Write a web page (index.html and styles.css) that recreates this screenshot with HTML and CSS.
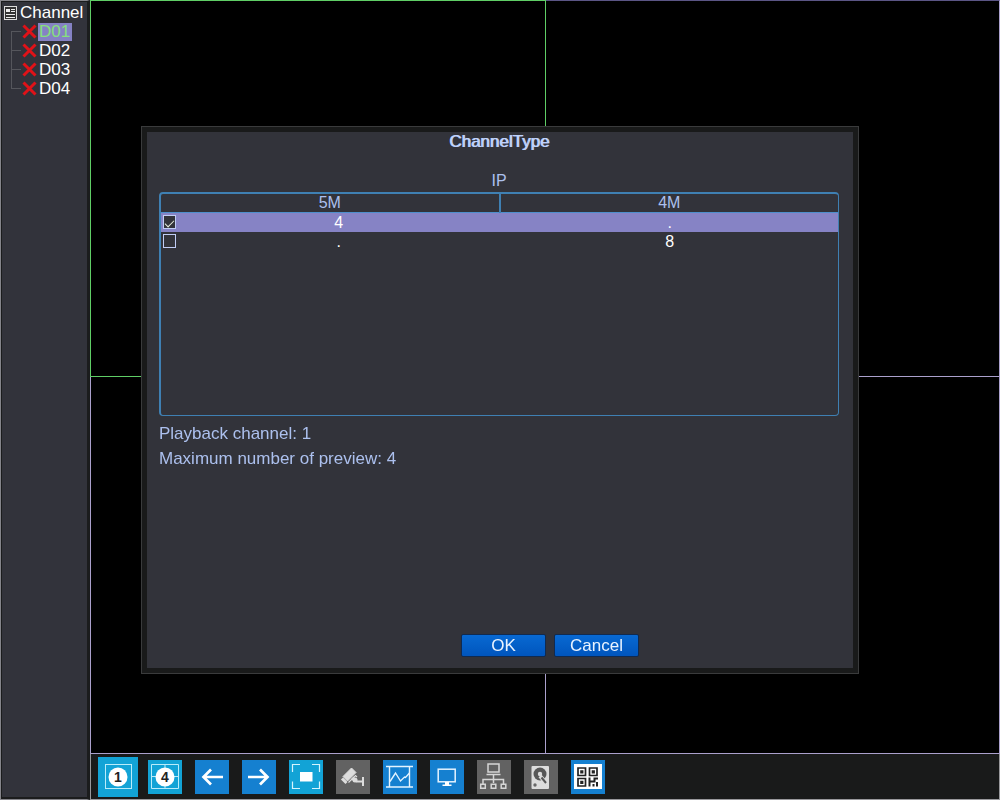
FILE: index.html
```html
<!DOCTYPE html>
<html lang="en">
<head>
<meta charset="utf-8">
<title>ChannelType</title>
<link rel="stylesheet" href="styles.css">
</head>
<body>
<div class="screen">
  <aside class="sidebar">
    <h2 class="tree-title">
      <svg class="tree-icon" viewBox="0 0 13 14" aria-hidden="true"><rect x=".5" y=".5" width="12" height="13" fill="#333" stroke="#ddd"/><path d="M2 3h4v3H2z" fill="#eee"/><path d="M7 3.500h4M7 5.500h4M2 8.500h9M2 11.500h9" stroke="#eee" fill="none"/></svg>
      Channel
    </h2>
    <ul class="tree">
      <li class="tree-item"><svg class="cross" viewBox="0 0 15 15" aria-hidden="true"><path d="M1.5 1.5l12 12M13.5 1.5l-12 12"/></svg><a class="tree-link selected" href="#d01">D01</a></li>
      <li class="tree-item"><svg class="cross" viewBox="0 0 15 15" aria-hidden="true"><path d="M1.5 1.5l12 12M13.5 1.5l-12 12"/></svg><a class="tree-link" href="#d02">D02</a></li>
      <li class="tree-item"><svg class="cross" viewBox="0 0 15 15" aria-hidden="true"><path d="M1.5 1.5l12 12M13.5 1.5l-12 12"/></svg><a class="tree-link" href="#d03">D03</a></li>
      <li class="tree-item"><svg class="cross" viewBox="0 0 15 15" aria-hidden="true"><path d="M1.5 1.5l12 12M13.5 1.5l-12 12"/></svg><a class="tree-link" href="#d04">D04</a></li>
    </ul>
  </aside>
  <main class="main">
    <div class="views">
      <div class="view active"></div>
      <div class="view"></div>
      <div class="view left"></div>
      <div class="view"></div>
    </div>
    <nav class="toolbar" aria-label="Preview tools">
      <button class="tool cyan current" type="button" aria-label="Single view"><svg viewBox="0 0 34 34"><rect x="4.500" y="4.500" width="26" height="24" fill="none" stroke="#b9ecfa"/><circle cx="17" cy="17" r="9.500" fill="#fff"/><text class="digit" x="17" y="22">1</text></svg></button>
      <button class="tool cyan" type="button" aria-label="Four views"><svg viewBox="0 0 34 34"><path d="M3.500 4.500h27v24h-27zM17 4v25M4 16.500h27" fill="none" stroke="#b9ecfa"/><circle cx="17" cy="17" r="9.500" fill="#fff"/><text class="digit" x="17" y="22">4</text></svg></button>
      <button class="tool" type="button" aria-label="Previous"><svg viewBox="0 0 34 34"><path d="M28 17H8.500M16 9.500L8.500 17l7.500 7.500" fill="none" stroke="#fff" stroke-width="2.700"/></svg></button>
      <button class="tool" type="button" aria-label="Next"><svg viewBox="0 0 34 34"><path d="M6 17h19.500M18 9.500l7.500 7.500-7.500 7.500" fill="none" stroke="#fff" stroke-width="2.700"/></svg></button>
      <button class="tool cyan" type="button" aria-label="Full screen"><svg viewBox="0 0 34 34"><path d="M3.500 12V4.500H11M23 4.500h7.500V12M30.500 21.500V28.500H23M11 28.500H3.500v-7" fill="none" stroke="#d4f4fd" stroke-width="1.200"/><rect x="11" y="12" width="12.500" height="9.500" fill="#fff"/></svg></button>
      <button class="tool gray" type="button" aria-label="PTZ camera"><svg viewBox="0 0 34 34"><path d="M7 16.500l8.500-8.500 4.500 4.500-8.500 8.500z" fill="#ddd" stroke="#ddd" stroke-linejoin="round"/><path d="M6 18.500l4.500 4.500" stroke="#ddd" stroke-width="3"/><path d="M12.500 22.500l7-7 1.500 1.500" fill="none" stroke="#ddd" stroke-width="1.200"/><circle cx="19" cy="20" r="2.500" fill="#ddd"/><path d="M15.500 20l2-2 3 3.500h6.500M27 17v9" fill="none" stroke="#ddd" stroke-width="2"/></svg></button>
      <button class="tool" type="button" aria-label="Image settings"><svg viewBox="0 0 34 34"><path d="M3 6.500h27M3 27h27M6.500 6v21M26.500 6v21" fill="none" stroke="#e4f3ff" stroke-width="1.400"/><path d="M7 21.500l5.500-8.500 5 8 4-4 1 .5 4-4.500" fill="none" stroke="#e4f3ff" stroke-width="1.400"/></svg></button>
      <button class="tool" type="button" aria-label="Display"><svg viewBox="0 0 34 34"><rect x="8.200" y="9.200" width="17" height="12.600" fill="none" stroke="#e4f3ff" stroke-width="1.500"/><path d="M15 22h4v2.500h2.500V26h-9v-1.500H15z" fill="#fff"/></svg></button>
      <button class="tool gray" type="button" aria-label="Network"><svg viewBox="0 0 34 34"><path d="M11 4h11v8H11zM9.500 14.500h14M16.500 15v8M6 23.500v-4h20.500v4M3.700 24.200h4.600v4H3.700zM14.200 24.200h4.600v4h-4.600zM24.200 24.200h4.600v4h-4.600z" fill="none" stroke="#d6d6d6" stroke-width="1.500"/></svg></button>
      <button class="tool gray" type="button" aria-label="Hard disk"><svg viewBox="0 0 34 34"><rect x="7.500" y="6" width="17.500" height="23" rx="1" fill="#ddd"/><circle cx="16" cy="14" r="6.500" fill="#585858"/><circle cx="16" cy="14" r="2.200" fill="#ddd"/><path d="M16 16l7 8" stroke="#ddd" stroke-width="4"/><path d="M17.500 17.500l4.500 5.500" stroke="#585858" stroke-width="2"/><circle cx="11" cy="25" r="1.700" fill="#686868"/></svg></button>
      <button class="tool" type="button" aria-label="QR code"><svg viewBox="0 0 34 34"><path d="M3 4h28v25H3z" fill="#fff"/><path d="M7 8h7.500v7.500H7zM18.500 8H26v7.500h-7.500zM7 18.500h7.500V26H7z" fill="none" stroke="#222" stroke-width="1.700"/><path d="M9.200 10.200h3.200v3.200H9.200zM20.700 10.200h3.200v3.200h-3.200zM9.200 20.700h3.200v3.200H9.200zM17.500 17.500h2v9h-2zM19.500 20.500h3v-3h4.500v2h-2.500v3h-5zM21.500 24h2v2.500h-2zM25 22h2v4.500h-2z" fill="#222"/></svg></button>
    </nav>
  </main>
</div>
<div class="overlay">
  <section class="dialog" role="dialog" aria-labelledby="dialog-title">
    <h1 class="dialog-title" id="dialog-title">ChannelType</h1>
    <p class="group">IP</p>
    <div class="list">
      <table class="table">
        <thead><tr><th>5M</th><th>4M</th></tr></thead>
        <tbody>
          <tr class="row-selected"><td><div class="choice"><input class="check" type="checkbox" id="mode-a" checked><label class="value" for="mode-a">4</label></div></td><td>.</td></tr>
          <tr><td><div class="choice"><input class="check" type="checkbox" id="mode-b"><label class="value" for="mode-b">.</label></div></td><td>8</td></tr>
        </tbody>
      </table>
    </div>
    <p class="info">Playback channel: 1</p>
    <p class="info">Maximum number of preview: 4</p>
    <div class="actions">
      <button class="btn" type="button">OK</button>
      <button class="btn" type="button">Cancel</button>
    </div>
  </section>
</div>
</body>
</html>
```
FILE: styles.css
```css
* { box-sizing: border-box; }

body {
  margin: 0;
  background: #000;
  color: #fff;
  font: 17px/19px "Liberation Sans", Arial, sans-serif;
}

button, input { font: inherit; }

.screen {
  display: grid;
  grid-template-columns: 90px 1fr;
  height: 100vh;
}

.sidebar {
  padding: 3px 0 0 3px;
  background: #32333b;
  border: 1px solid #85858b;
  border-right: 3px solid #1b1c1d;
  box-shadow: inset 1px 1px #1b1c1d, inset 0 -2px #1b1c1d;
}

.tree-title {
  display: flex;
  align-items: center;
  gap: 3px;
  margin: 0;
  font-size: 17px;
  font-weight: 400;
  line-height: 18px;
}

.tree-icon { width: 13px; height: 14px; }

.tree {
  margin: 0;
  padding: 0 0 0 7px;
  list-style: none;
}

.tree-item {
  display: flex;
  align-items: center;
  height: 19px;
  background:
    linear-gradient(#55565c, #55565c) 0 0 / 1px 100% no-repeat,
    linear-gradient(#55565c, #55565c) 0 9px / 10px 1px no-repeat;
}

.tree-item:last-child {
  background:
    linear-gradient(#55565c, #55565c) 0 0 / 1px 10px no-repeat,
    linear-gradient(#55565c, #55565c) 0 9px / 10px 1px no-repeat;
}

.tree-item:first-child {
  background:
    linear-gradient(#55565c, #55565c) 0 9px / 1px 10px no-repeat,
    linear-gradient(#55565c, #55565c) 0 9px / 10px 1px no-repeat;
}

.cross {
  width: 15px;
  height: 15px;
  margin-left: 11px;
  fill: none;
  stroke: #e01218;
  stroke-width: 3;
}

.tree-link {
  margin-left: 1px;
  padding: 0 2px 0 1px;
  color: #fff;
  line-height: 18px;
  text-decoration: none;
}

.tree-link.selected {
  background: #8582c4;
  color: #86e07c;
}

.main {
  display: grid;
  grid-template-rows: 1fr 46px;
}

.views {
  display: grid;
  grid-template-columns: 456fr 454fr;
  grid-template-rows: 1fr 1fr;
}

.view {
  border: 0 solid #aaa0cc;
  border-width: 0 1px 1px 0;
}

.view:nth-child(2) { border-top: 1px solid #5b5585; }
.view.left { border-left: 1px solid #aaa0cc; }
.view.active { border: 1px solid #5fce66; }

.toolbar {
  display: flex;
  align-items: flex-start;
  gap: 13px;
  padding: 6px 10px 0;
  background: #191a1a;
  border: 1px solid #98989c;
  border-top: 0;
}

.tool {
  width: 34px;
  height: 34px;
  padding: 0;
  border: 0;
  background: #1580d0;
}

.tool svg { display: block; }
.tool.cyan { background: #12a3d6; }
.tool.gray { background: #626262; }
.tool.current { box-shadow: 0 0 0 3px #12a3d6; }

.digit {
  fill: #222;
  font: bold 14px "Liberation Sans", Arial, sans-serif;
  text-anchor: middle;
}

.overlay {
  position: fixed;
  inset: 0;
  display: grid;
  place-items: center;
}

.dialog {
  display: flex;
  flex-direction: column;
  width: min(718px, 94%);
  min-height: 548px;
  padding: 0 14px 11px 12px;
  background: #32333a;
  background-clip: padding-box;
  border: 6px solid #191a1a;
  outline: 1px solid #3a3b3c;
  outline-offset: -1px;
  color: #acc0ee;
}

.dialog-title {
  margin: 0;
  color: #bfd2fb;
  font-size: 17px;
  font-weight: 400;
  line-height: 19px;
  text-align: center;
  text-shadow: 1px 0 #bfd2fb;
}

.group {
  margin: 20px 0 2px;
  font-size: 16px;
  text-align: center;
}

.list {
  height: 224px;
  border: 2px solid #3f80b3;
  border-width: 2px 1px 1px 2px;
  border-radius: 4px;
  overflow: hidden;
}

.table {
  width: 100%;
  table-layout: fixed;
  border-collapse: collapse;
  font-size: 16px;
  text-align: center;
}

.table th {
  height: 18px;
  padding: 0;
  border-bottom: 1px solid #4e8fcc;
  font-weight: 400;
  line-height: 17px;
}

.table th:first-child { border-right: 2px solid #3f80b3; }

.table td {
  height: 19px;
  padding: 0 0 0 2px;
  color: #fff;
}

.row-selected { background: #8683c5; }

.choice {
  display: flex;
  align-items: center;
}

.value { flex: 1; padding-left: 2px; }

.check {
  display: grid;
  place-items: center;
  width: 13px;
  height: 14px;
  margin: 0;
  appearance: none;
  background: #32333a;
  border: 1px solid #c0cdf5;
}

.check:checked::after {
  content: "";
  width: 8px;
  height: 4px;
  border: solid #e8f0e0;
  border-width: 0 0 1px 1px;
  transform: rotate(-45deg);
}

.info {
  margin: 8px 0 0;
  line-height: 19px;
}

.info + .info { margin-top: 6px; }

.actions {
  display: flex;
  justify-content: center;
  gap: 8px;
  margin-top: auto;
  padding-left: 102px;
}

.btn {
  width: 85px;
  height: 23px;
  padding: 0;
  border: 1px solid #102a50;
  border-radius: 2px;
  background: linear-gradient(#0869d2, #0055bd);
  color: #e9f3ff;
}
```
